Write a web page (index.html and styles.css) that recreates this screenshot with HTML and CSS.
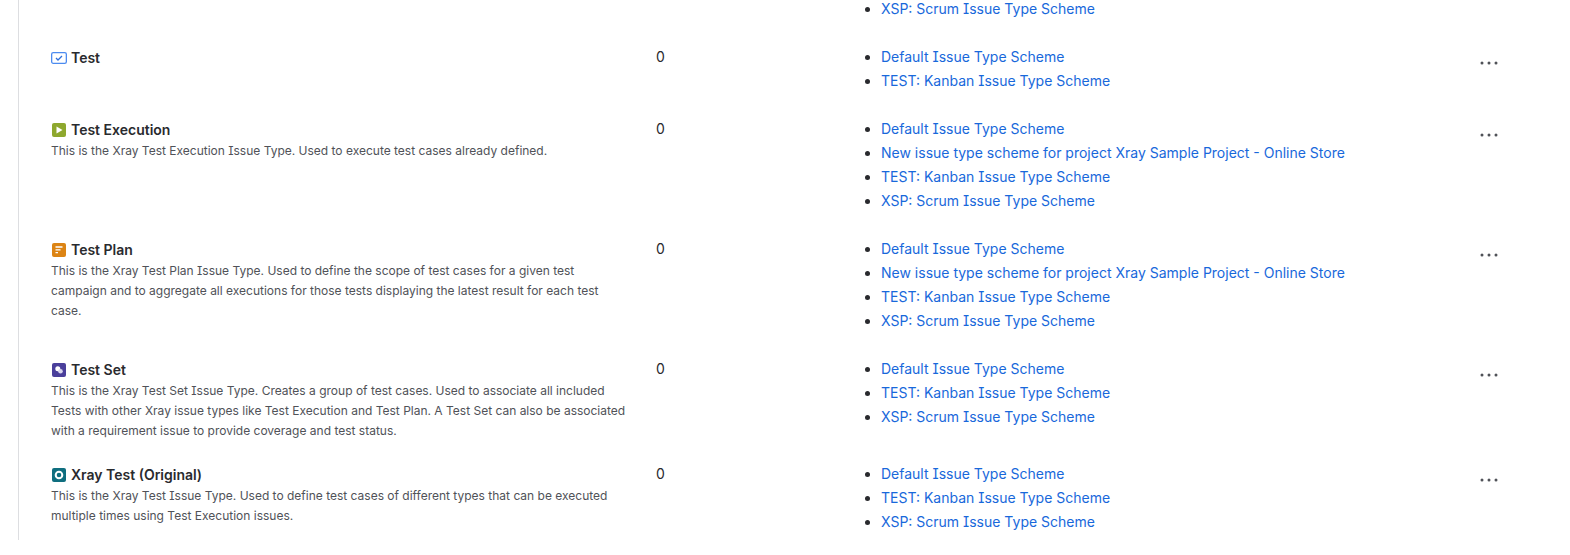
FILE: index.html
```html
<!DOCTYPE html>
<html lang="en">
    <head>
        <meta charset="UTF-8" />
        <title>Issue types</title>
        <link rel="stylesheet" href="styles.css">
    </head>
    <body>
        <div class="page">
            <div class="rows">
                <div class="row row-partial">
                    <div></div>
                    <div></div>
                    <ul class="schemes">
                        <li><a href="#">XSP: Scrum Issue Type Scheme</a></li>
                    </ul>
                    <div></div>
                </div>

                <div class="row">
                    <div class="type">
                        <div class="type-name">
                            <svg class="type-icon" viewBox="0 0 16 16">
                                <rect x="0.65" y="2.65" width="14.7" height="10.7" rx="1.6" fill="#fff" stroke="#4c8bf0" stroke-width="1.3" />
                                <path d="M5 8l2 2 4-4" fill="none" stroke="#2f6fdb" stroke-width="1.3" />
                            </svg>
                            Test
                        </div>
                    </div>
                    <div class="count">0</div>
                    <ul class="schemes">
                        <li><a href="#">Default Issue Type Scheme</a></li>
                        <li><a href="#">TEST: Kanban Issue Type Scheme</a></li>
                    </ul>
                    <div class="actions">
                        <svg class="more" viewBox="0 0 18 4"><circle cx="2" cy="2" r="1.5" /><circle cx="9" cy="2" r="1.5" /><circle cx="16" cy="2" r="1.5" /></svg>
                    </div>
                </div>

                <div class="row">
                    <div class="type">
                        <div class="type-name">
                            <svg class="type-icon" viewBox="0 0 16 16">
                                <rect x="1" y="1" width="14" height="14" rx="2" fill="#8ea82e" />
                                <path d="M5.500 4.500v7l6-3.500z" fill="#fff" />
                            </svg>
                            Test Execution
                        </div>
                        <p class="type-desc">This is the Xray Test Execution Issue Type. Used to execute test cases already defined.</p>
                    </div>
                    <div class="count">0</div>
                    <ul class="schemes">
                        <li><a href="#">Default Issue Type Scheme</a></li>
                        <li><a href="#">New issue type scheme for project Xray Sample Project - Online Store</a></li>
                        <li><a href="#">TEST: Kanban Issue Type Scheme</a></li>
                        <li><a href="#">XSP: Scrum Issue Type Scheme</a></li>
                    </ul>
                    <div class="actions">
                        <svg class="more" viewBox="0 0 18 4"><circle cx="2" cy="2" r="1.5" /><circle cx="9" cy="2" r="1.5" /><circle cx="16" cy="2" r="1.5" /></svg>
                    </div>
                </div>

                <div class="row">
                    <div class="type">
                        <div class="type-name">
                            <svg class="type-icon" viewBox="0 0 16 16">
                                <rect x="1" y="1" width="14" height="14" rx="2" fill="#dc8414" />
                                <path d="M4.500 5h7M4.500 7.800h5M4.500 10.600h2.500" fill="none" stroke="#fff" stroke-width="1.300" />
                            </svg>
                            Test Plan
                        </div>
                        <p class="type-desc">This is the Xray Test Plan Issue Type. Used to define the scope of test cases for a given test campaign and to aggregate all executions for those tests displaying the latest result for each test case.</p>
                    </div>
                    <div class="count">0</div>
                    <ul class="schemes">
                        <li><a href="#">Default Issue Type Scheme</a></li>
                        <li><a href="#">New issue type scheme for project Xray Sample Project - Online Store</a></li>
                        <li><a href="#">TEST: Kanban Issue Type Scheme</a></li>
                        <li><a href="#">XSP: Scrum Issue Type Scheme</a></li>
                    </ul>
                    <div class="actions">
                        <svg class="more" viewBox="0 0 18 4"><circle cx="2" cy="2" r="1.5" /><circle cx="9" cy="2" r="1.5" /><circle cx="16" cy="2" r="1.5" /></svg>
                    </div>
                </div>

                <div class="row">
                    <div class="type">
                        <div class="type-name">
                            <svg class="type-icon" viewBox="0 0 16 16">
                                <rect x="1" y="1" width="14" height="14" rx="2" fill="#4a3f9b" />
                                <circle cx="6.800" cy="6.800" r="2.500" fill="#fff" />
                                <circle cx="9.500" cy="9.300" r="2.300" fill="#d9d6ef" />
                            </svg>
                            Test Set
                        </div>
                        <p class="type-desc">This is the Xray Test Set Issue Type. Creates a group of test cases. Used to associate all included Tests with other Xray issue types like Test Execution and Test Plan. A Test Set can also be associated with a requirement issue to provide coverage and test status.</p>
                    </div>
                    <div class="count">0</div>
                    <ul class="schemes">
                        <li><a href="#">Default Issue Type Scheme</a></li>
                        <li><a href="#">TEST: Kanban Issue Type Scheme</a></li>
                        <li><a href="#">XSP: Scrum Issue Type Scheme</a></li>
                    </ul>
                    <div class="actions">
                        <svg class="more" viewBox="0 0 18 4"><circle cx="2" cy="2" r="1.5" /><circle cx="9" cy="2" r="1.5" /><circle cx="16" cy="2" r="1.5" /></svg>
                    </div>
                </div>

                <div class="row">
                    <div class="type">
                        <div class="type-name">
                            <svg class="type-icon" viewBox="0 0 16 16">
                                <rect x="1" y="1" width="14" height="14" rx="2" fill="#0f6e7f" />
                                <circle cx="8" cy="8" r="3.300" fill="none" stroke="#fff" stroke-width="2" />
                            </svg>
                            Xray Test (Original)
                        </div>
                        <p class="type-desc">This is the Xray Test Issue Type. Used to define test cases of different types that can be executed multiple times using Test Execution issues.</p>
                    </div>
                    <div class="count">0</div>
                    <ul class="schemes">
                        <li><a href="#">Default Issue Type Scheme</a></li>
                        <li><a href="#">TEST: Kanban Issue Type Scheme</a></li>
                        <li><a href="#">XSP: Scrum Issue Type Scheme</a></li>
                    </ul>
                    <div class="actions">
                        <svg class="more" viewBox="0 0 18 4"><circle cx="2" cy="2" r="1.5" /><circle cx="9" cy="2" r="1.5" /><circle cx="16" cy="2" r="1.5" /></svg>
                    </div>
                </div>
            </div>
        </div>
    </body>
</html>
```

FILE: styles.css
```css
html,
body {
    height: 100%;
}
body {
    margin: 0;
    overflow: hidden;
    background-color: #fff;
    color: #292a2e;
    font-family: Inter, "Liberation Sans", sans-serif;
    font-size: 14px;
    font-feature-settings: "cv08";
}
.page {
    height: 100%;
    margin-left: 18px;
    border-left: 1px solid #dddee1;
}
.rows {
    margin-top: -15px;
    padding-left: 32px;
}
.row {
    display: grid;
    grid-template-columns: 604px 201px 622px 60px;
    padding: 12px 0 9px;
}
.type-name {
    display: flex;
    align-items: center;
    gap: 4px;
    height: 24px;
    padding-top: 1px;
    box-sizing: border-box;
    font-weight: 600;
}
.type-icon {
    width: 16px;
    height: 16px;
    flex: none;
    margin-top: 1px;
}
.type-desc {
    margin: 0;
    padding-right: 24px;
    color: #505258;
    font-size: 12px;
    line-height: 20px;
}
.count {
    padding-left: 1px;
    line-height: 24px;
}
.schemes {
    margin: 0 0 3px;
    padding-left: 25px;
    line-height: 24px;
}
.schemes a {
    color: #1868db;
    text-decoration: none;
}
.actions {
    padding: 15px 0 0 2px;
    line-height: 0;
}
.more {
    width: 18px;
    height: 4px;
    fill: #505258;
}
```
